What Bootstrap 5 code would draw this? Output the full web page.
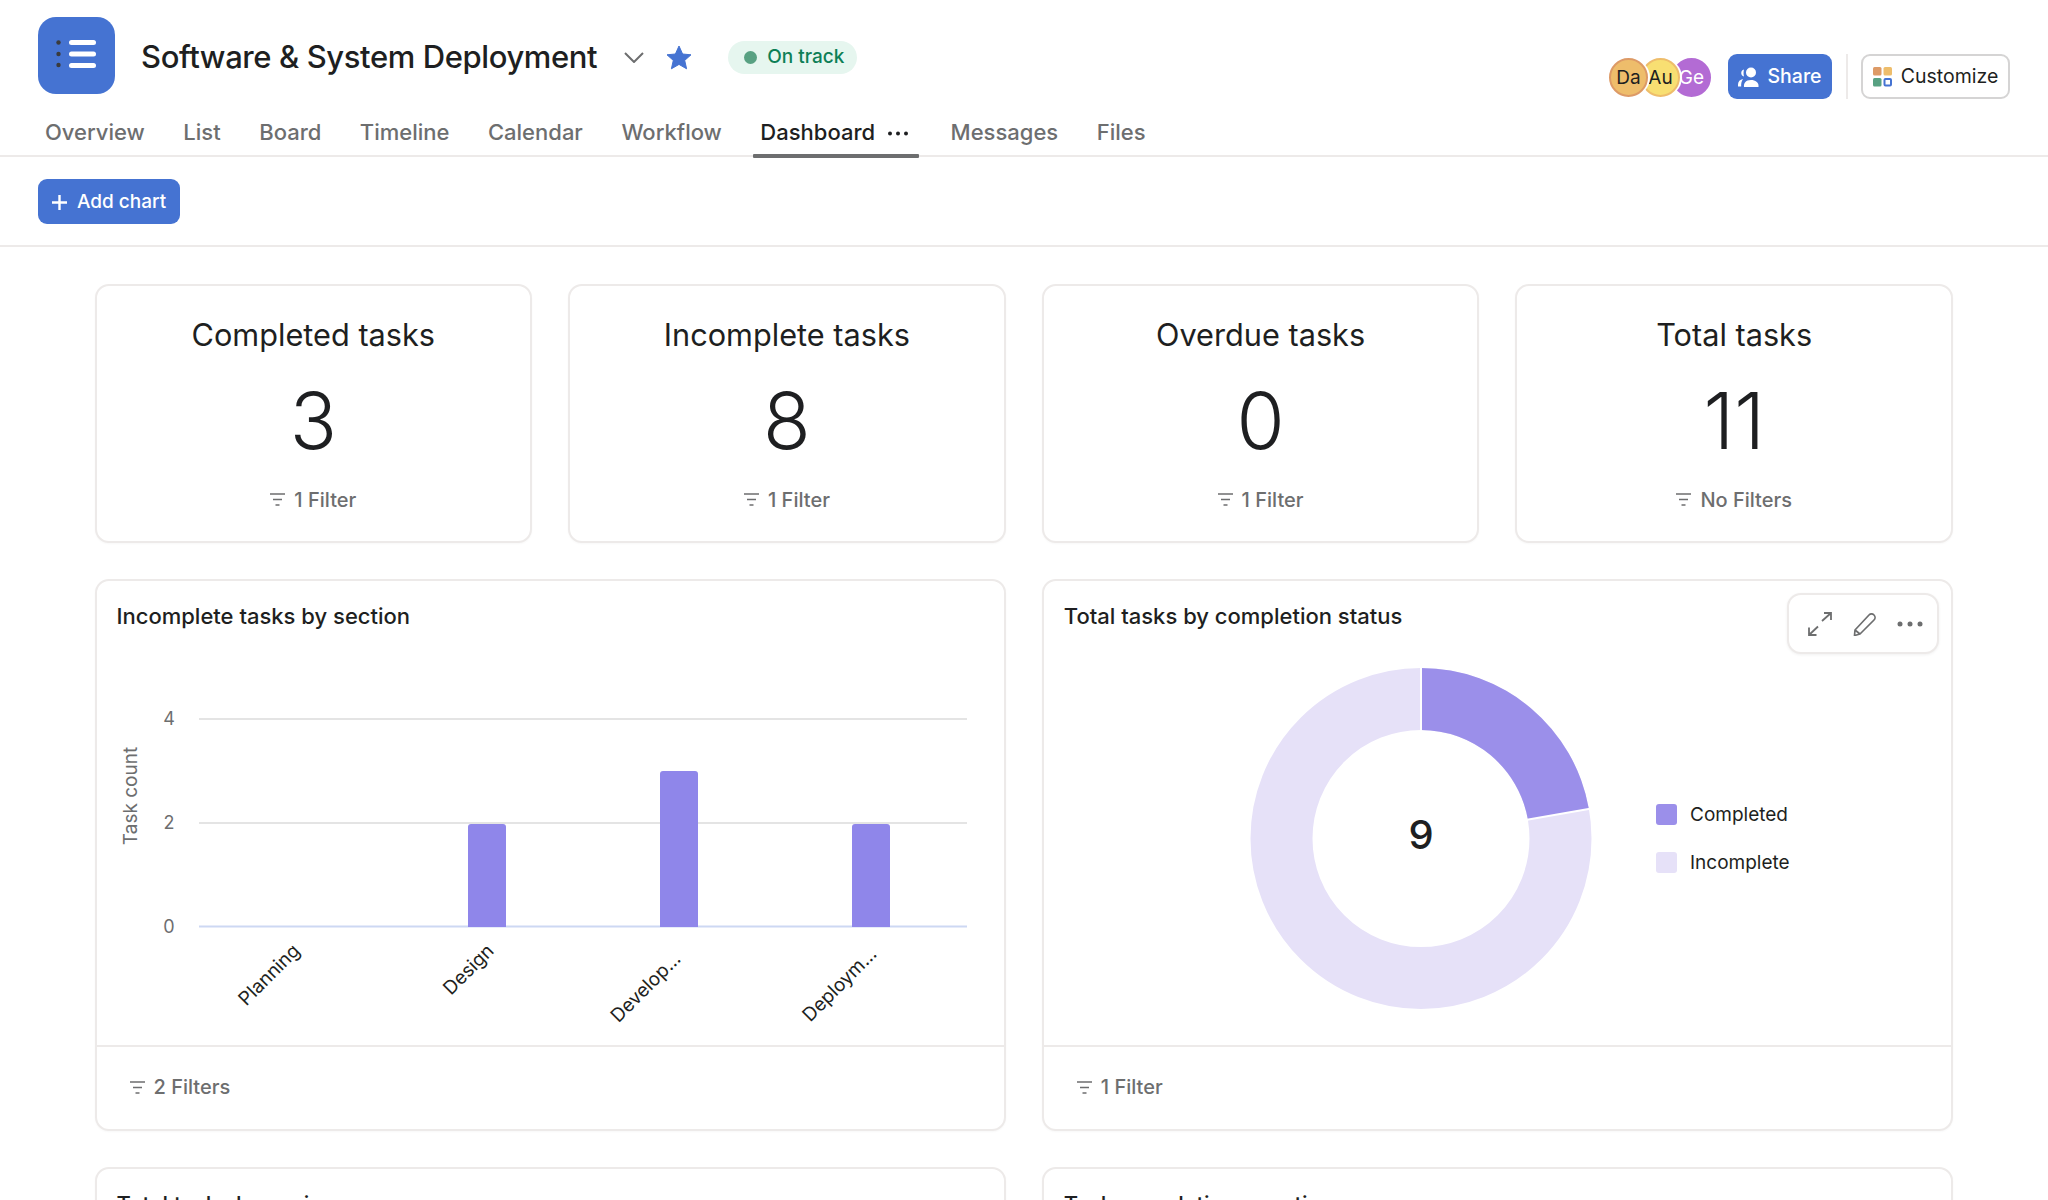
<!DOCTYPE html>
<html lang="en">
<head>
<meta charset="utf-8">
<title>Software &amp; System Deployment</title>
<link rel="stylesheet" href="https://cdn.jsdelivr.net/npm/bootstrap@5.3.0/dist/css/bootstrap.min.css">
<style>
html,body{height:1200px;overflow:hidden;background:#fff}
body{font-family:Inter,"Liberation Sans",sans-serif;color:#1e1f21}
.topbar{height:157px;border-bottom:2px solid #edeae9;padding-left:38px;padding-right:38px}
.appicon{width:77px;height:77px;background:#4573d2;border-radius:18px;margin-top:17px}
.ptitle{font-size:31px;font-weight:500;line-height:40px;margin:0 0 0 26px;white-space:nowrap;letter-spacing:-.4px}
.titlerow{height:111px}
.chev{margin-left:27px;margin-top:1px}
.staricon{margin-left:22px}
.statuspill{margin-left:36px;height:33px;padding:0 13px 0 16px;background:#e6f6ef;color:#0d7f56;border-radius:17px;font-size:19px;font-weight:500;gap:10px}
.statusdot{width:13px;height:13px;border-radius:50%;background:#58a182}
.tabrow{padding-left:7px;gap:38.500px;height:46px;margin-top:1px}
.tabitem{font-size:22px;font-weight:500;color:#6d6e6f;line-height:41px;text-decoration:none;height:46px;position:relative;white-space:nowrap}
.tabitem.current{color:#1e1f21;margin-right:4px;gap:13px}
.tabitem.current::after{content:"";position:absolute;left:-7px;right:-11px;bottom:0;height:4px;background:#6d6e6f;border-radius:1px}
.rightgroup{padding-top:54px}
.avatarset{margin-right:17px;margin-top:4px}
.avt{width:39px;height:39px;border-radius:50%;font-size:19px;display:flex;align-items:center;justify-content:center;border:2px solid;position:relative;line-height:1}
.avt+.avt{margin-left:-7px}
.avt-da{background:#eebd6b;border-color:#dd9a66;z-index:3;box-shadow:2px 0 0 #fff}
.avt-au{background:#f8df72;border-color:#eebd6b;z-index:2;box-shadow:2px 0 0 #fff}
.avt.avt-ge{background:#b36bd4;border-color:#b36bd4;color:#fff;z-index:1;margin-left:-8px}
.btn.sharebtn,.btn.addbtn{background:#4573d2;border:0;color:#fff;font-size:19.500px;font-weight:500;border-radius:9px;height:45px;display:inline-flex;align-items:center;white-space:nowrap;padding:0}
.sharebtn{width:104px;justify-content:center;gap:8px}
.vrule{width:2px;height:45px;background:#edeae9;margin:0 13px 0 14px}
.btn.custbtn{background:#fff;border:2px solid #d5d4d4;color:#1e1f21;font-size:19.500px;font-weight:400;border-radius:9px;height:45px;width:149px;padding:0;display:inline-flex;align-items:center;justify-content:center;gap:9px;white-space:nowrap}
.toolbar{height:90px;border-bottom:2px solid #edeae9;padding:22px 38px 0}
.btn.addbtn{font-size:19px;width:142px;justify-content:center;gap:10px;padding-top:1px}
.boardarea{padding:37px 95px 0 94.500px}
.boardrow{--bs-gutter-x:36px;--bs-gutter-y:36px}
.tile{background:#fff;border:2px solid #edeae9;border-radius:14px;box-shadow:0 1px 2px rgba(0,0,0,.03)}
.stattile{height:259px;padding-top:27.500px}
.statname{font-size:30.700px;line-height:42px;font-weight:400}
.statnum{font-size:78px;line-height:90px;font-weight:300;margin-top:20px}
.filterline{font-size:20px;font-weight:500;color:#6d6e6f;gap:9px;line-height:26px}
.stattile .filterline{margin-top:21px}
.charttile{height:552px}
.chartbody{height:464px;padding:19px 20px 0;position:relative}
.charthead{font-size:22px;font-weight:500;line-height:32px}
.chartfoot{height:84px;border-top:2px solid #edeae9;padding:0 33px 2px}
.tallsvg{position:absolute;left:0;top:0}
.toolbox{position:absolute;right:12px;top:12px;width:152px;height:61px;background:#fff;border:2px solid #edeae9;border-radius:14px;box-shadow:0 1px 3px rgba(0,0,0,.06);padding:0 14px 0 18px;justify-content:space-between}
.axistext{font-family:Inter,"Liberation Sans",sans-serif;font-size:18px;fill:#6d6e6f}
.axistitle{font-family:Inter,"Liberation Sans",sans-serif;font-size:19px;fill:#6d6e6f}
.catext{font-family:Inter,"Liberation Sans",sans-serif;font-size:19px;fill:#1e1f21}
.centernum{font-family:Inter,"Liberation Sans",sans-serif;font-size:40px;font-weight:500;fill:#1e1f21}
.legendtext{font-family:Inter,"Liberation Sans",sans-serif;font-size:19px;fill:#1e1f21}
</style>
</head>
<body>
<header class="topbar d-flex justify-content-between align-items-start">
  <div>
    <div class="titlerow d-flex align-items-start">
      <div class="appicon d-flex align-items-center justify-content-center flex-shrink-0">
        <svg width="77" height="77" viewBox="0 0 77 77" aria-hidden="true"><g fill="#3a3b3d"><circle cx="20.500" cy="25.500" r="2.200"/><circle cx="20.500" cy="37" r="2.200"/><circle cx="20.500" cy="48" r="2.200"/></g><g fill="#fff"><rect x="31" y="23" width="27" height="5" rx="2.500"/><rect x="31" y="34.500" width="27" height="5" rx="2.500"/><rect x="31" y="46" width="27" height="5" rx="2.500"/></g></svg>
      </div>
      <div class="d-flex align-items-center" style="height:114px">
        <h1 class="ptitle">Software &amp; System Deployment</h1>
        <svg class="chev" width="20" height="11" viewBox="0 0 20 11" aria-hidden="true"><path d="M1 1l9 9 9-9" fill="none" stroke="#6d6e6f" stroke-width="2"/></svg>
        <svg class="staricon" width="26" height="25" viewBox="0 0 26 25" aria-hidden="true"><path d="M13 1l3.600 8 8.400.8-6.300 5.600 1.900 8.400L13 19.400 5.400 23.800l1.900-8.400L1 9.800 9.400 9z" fill="#4573d2" stroke="#4573d2" stroke-linejoin="round"/></svg>
        <span class="statuspill d-inline-flex align-items-center"><span class="statusdot"></span>On track</span>
      </div>
    </div>
    <nav class="tabrow d-flex">
      <a class="tabitem" href="#">Overview</a>
      <a class="tabitem" href="#">List</a>
      <a class="tabitem" href="#">Board</a>
      <a class="tabitem" href="#">Timeline</a>
      <a class="tabitem" href="#">Calendar</a>
      <a class="tabitem" href="#">Workflow</a>
      <a class="tabitem current d-flex align-items-start" href="#">Dashboard<svg width="20" height="41" viewBox="0 0 20 41" aria-hidden="true"><g fill="#1e1f21"><circle cx="2" cy="21.500" r="2"/><circle cx="10" cy="21.500" r="2"/><circle cx="18" cy="21.500" r="2"/></g></svg></a>
      <a class="tabitem" href="#">Messages</a>
      <a class="tabitem" href="#">Files</a>
    </nav>
  </div>
  <div class="rightgroup d-flex align-items-start">
    <div class="avatarset d-flex">
      <span class="avt avt-da">Da</span><span class="avt avt-au">Au</span><span class="avt avt-ge">Ge</span>
    </div>
    <button class="btn sharebtn" type="button"><svg width="21" height="20" viewBox="0 0 21 20" aria-hidden="true"><g fill="#fff"><circle cx="13" cy="5.500" r="5"/><path d="M6 2.500a3.600 3.600 0 0 0 0 7c-.6-2.200-.6-4.800 0-7z"/><path d="M6 20c-.6-3.500 1.500-7 7-7 4.500 0 7.500 2.500 7.500 5.500V20z"/><path d="M0 19.500v-2c0-3 2-5 5-5.500-1.500 2-2 5-1.800 7.500z"/></g></svg>Share</button>
    <span class="vrule"></span>
    <button class="btn custbtn" type="button"><svg width="19" height="20" viewBox="0 0 19 20" aria-hidden="true"><rect x="0" y="0" width="8.500" height="8.500" rx="1.500" fill="#dd9a66"/><rect x="10.500" y="0" width="8.500" height="8.500" rx="1.500" fill="#eebd6b"/><rect x="0" y="11" width="8.500" height="8.500" rx="1.500" fill="#58a182"/><rect x="11.500" y="12" width="6.500" height="6.500" rx="1" fill="none" stroke="#4573d2" stroke-width="2"/></svg>Customize</button>
  </div>
</header>

<div class="toolbar">
  <button class="btn addbtn" type="button"><svg width="15" height="15" viewBox="0 0 15 15" aria-hidden="true"><path d="M7.500 0v15M0 7.500h15" stroke="#fff" stroke-width="2.400"/></svg>Add chart</button>
</div>

<main class="boardarea">
  <div class="row boardrow">
    <div class="col-3"><div class="tile stattile text-center"><div class="statname">Completed tasks</div><div class="statnum">3</div><div class="filterline d-flex justify-content-center align-items-center"><svg width="15" height="13" viewBox="0 0 15 13" aria-hidden="true"><path d="M0 1h15M3 6.500h9M5.500 12h4" stroke="#6d6e6f" stroke-width="1.500"/></svg>1 Filter</div></div></div>
    <div class="col-3"><div class="tile stattile text-center"><div class="statname">Incomplete tasks</div><div class="statnum">8</div><div class="filterline d-flex justify-content-center align-items-center"><svg width="15" height="13" viewBox="0 0 15 13" aria-hidden="true"><path d="M0 1h15M3 6.500h9M5.500 12h4" stroke="#6d6e6f" stroke-width="1.500"/></svg>1 Filter</div></div></div>
    <div class="col-3"><div class="tile stattile text-center"><div class="statname">Overdue tasks</div><div class="statnum">0</div><div class="filterline d-flex justify-content-center align-items-center"><svg width="15" height="13" viewBox="0 0 15 13" aria-hidden="true"><path d="M0 1h15M3 6.500h9M5.500 12h4" stroke="#6d6e6f" stroke-width="1.500"/></svg>1 Filter</div></div></div>
    <div class="col-3"><div class="tile stattile text-center"><div class="statname">Total tasks</div><div class="statnum">11</div><div class="filterline d-flex justify-content-center align-items-center"><svg width="15" height="13" viewBox="0 0 15 13" aria-hidden="true"><path d="M0 1h15M3 6.500h9M5.500 12h4" stroke="#6d6e6f" stroke-width="1.500"/></svg>No Filters</div></div></div>

    <div class="col-6"><div class="tile charttile">
      <div class="chartbody">
        <div class="charthead">Incomplete tasks by section</div>
        <svg class="tallsvg" width="908" height="464" viewBox="97 581 908 464" aria-label="Incomplete tasks by section chart">
          <g stroke="#e4e4e4" stroke-width="2"><path d="M199 719H967"/><path d="M199 823H967"/></g>
          <path d="M199 926.500H967" stroke="#cdd8f3" stroke-width="2"/>
          <g fill="#8f86ea"><path d="M468 927V827a3 3 0 0 1 3-3h32a3 3 0 0 1 3 3v100z"/><path d="M660 927V774a3 3 0 0 1 3-3h32a3 3 0 0 1 3 3v153z"/><path d="M852 927V827a3 3 0 0 1 3-3h32a3 3 0 0 1 3 3v100z"/></g>
          <g class="axistext" text-anchor="middle"><text x="169" y="725">4</text><text x="169" y="829">2</text><text x="169" y="933">0</text></g>
          <text class="axistitle" text-anchor="middle" transform="translate(137 796) rotate(-90)">Task count</text>
          <g class="catext" text-anchor="end">
            <text transform="translate(301 952) rotate(-45)">Planning</text>
            <text transform="translate(495 952) rotate(-45)">Design</text>
            <text transform="translate(682 960) rotate(-45)">Develop...</text>
            <text transform="translate(878 955) rotate(-45)">Deploym...</text>
          </g>
        </svg>
      </div>
      <div class="chartfoot d-flex align-items-center"><div class="filterline d-flex align-items-center"><svg width="15" height="13" viewBox="0 0 15 13" aria-hidden="true"><path d="M0 1h15M3 6.500h9M5.500 12h4" stroke="#6d6e6f" stroke-width="1.500"/></svg>2 Filters</div></div>
    </div></div>

    <div class="col-6"><div class="tile charttile">
      <div class="chartbody">
        <div class="charthead">Total tasks by completion status</div>
        <svg class="tallsvg" width="908" height="464" viewBox="1043 581 908 464" aria-label="Total tasks by completion status chart">
          <circle cx="1420" cy="838.500" r="139.500" fill="none" stroke="#e6e1f8" stroke-width="62"/>
          <path d="M1420 668A170.500 170.500 0 0 1 1587.900 808.900L1526.900 819.600A108.500 108.500 0 0 0 1420 730z" fill="#9b8fea"/>
          <g stroke="#fff" stroke-width="2"><path d="M1420 667V730"/><path d="M1589 808.700L1526 819.800"/></g>
          <text class="centernum" x="1420" y="849" text-anchor="middle">9</text>
          <rect x="1655" y="804" width="21" height="21" rx="3" fill="#9b8fea"/>
          <rect x="1655" y="852" width="21" height="21" rx="3" fill="#e6e1f8"/>
          <text class="legendtext" x="1689" y="821">Completed</text>
          <text class="legendtext" x="1689" y="869">Incomplete</text>
        </svg>
        <div class="toolbox d-flex align-items-center">
          <svg width="26" height="24" viewBox="0 0 26 24" aria-hidden="true"><path d="M15 9L24 1M17 1h7v7M11 14.500L2 23M2 15.500V23h7.500" fill="none" stroke="#6d6e6f" stroke-width="1.800"/></svg>
          <svg width="24" height="24" viewBox="0 0 24 24" aria-hidden="true"><path d="M2 18L16 3a3.500 3.500 0 0 1 5 5L7 22l-5.500 1.500zM2 18l5 4" fill="none" stroke="#6d6e6f" stroke-width="1.700" stroke-linejoin="round"/></svg>
          <svg width="26" height="6" viewBox="0 0 26 6" aria-hidden="true"><g fill="#6d6e6f"><circle cx="3" cy="3" r="2.500"/><circle cx="13" cy="3" r="2.500"/><circle cx="23" cy="3" r="2.500"/></g></svg>
        </div>
      </div>
      <div class="chartfoot d-flex align-items-center"><div class="filterline d-flex align-items-center"><svg width="15" height="13" viewBox="0 0 15 13" aria-hidden="true"><path d="M0 1h15M3 6.500h9M5.500 12h4" stroke="#6d6e6f" stroke-width="1.500"/></svg>1 Filter</div></div>
    </div></div>

    <div class="col-6"><div class="tile charttile"><div class="chartbody"><div class="charthead">Total tasks by assignee</div></div></div></div>
    <div class="col-6"><div class="tile charttile"><div class="chartbody"><div class="charthead">Task completion over time</div></div></div></div>
  </div>
</main>
<script src="https://cdn.jsdelivr.net/npm/bootstrap@5.3.0/dist/js/bootstrap.bundle.min.js"></script>
</body>
</html>
